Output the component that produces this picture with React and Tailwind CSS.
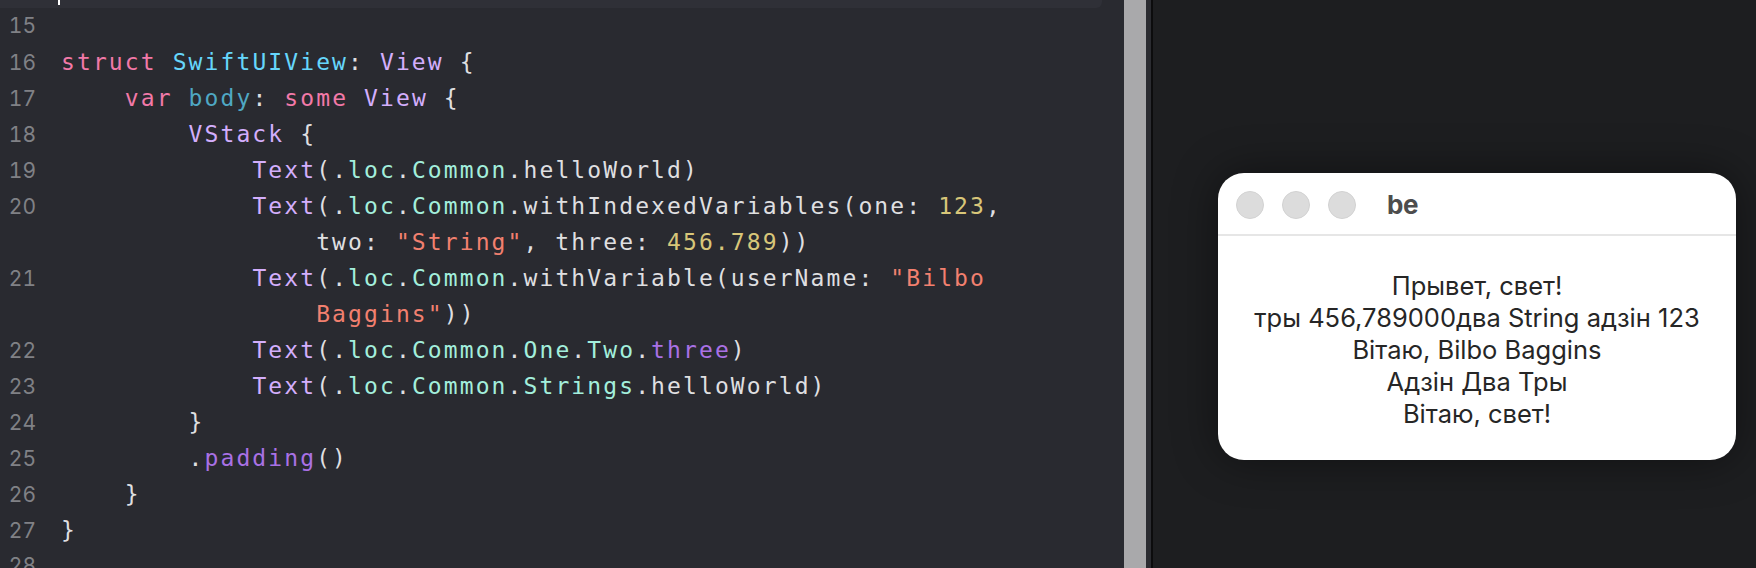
const C = {
  plain: 'text-[#dfdfe0]',
  kw: 'text-[#f279a8]',
  decl: 'text-[#66d6fb]',
  prop: 'text-[#4fa8c4]',
  type: 'text-[#d3aefc]',
  mint: 'text-[#a3efdc]',
  num: 'text-[#d8c679]',
  str: 'text-[#f2806f]',
  fn: 'text-[#a971e5]',
};

const t = (cls, s) => ({ cls, s });
const p = (s) => t(C.plain, s);
const loc = [p('('), p('.'), t(C.mint, 'loc'), p('.'), t(C.mint, 'Common'), p('.')];

const rows = [
  { n: 15, code: [] },
  { n: 16, code: [t(C.kw, 'struct'), p(' '), t(C.decl, 'SwiftUIView'), p(': '), t(C.type, 'View'), p(' {')] },
  { n: 17, code: [p('    '), t(C.kw, 'var'), p(' '), t(C.prop, 'body'), p(': '), t(C.kw, 'some'), p(' '), t(C.type, 'View'), p(' {')] },
  { n: 18, code: [p('        '), t(C.type, 'VStack'), p(' {')] },
  { n: 19, code: [p('            '), t(C.type, 'Text'), ...loc, p('helloWorld)')] },
  { n: 20, code: [p('            '), t(C.type, 'Text'), ...loc, p('withIndexedVariables(one: '), t(C.num, '123'), p(',')] },
  { n: '', code: [p('                two: '), t(C.str, '"String"'), p(', three: '), t(C.num, '456.789'), p('))')] },
  { n: 21, code: [p('            '), t(C.type, 'Text'), ...loc, p('withVariable(userName: '), t(C.str, '"Bilbo')] },
  { n: '', code: [p('                '), t(C.str, 'Baggins"'), p('))')] },
  { n: 22, code: [p('            '), t(C.type, 'Text'), ...loc, t(C.mint, 'One'), p('.'), t(C.mint, 'Two'), p('.'), t(C.fn, 'three'), p(')')] },
  { n: 23, code: [p('            '), t(C.type, 'Text'), ...loc, t(C.mint, 'Strings'), p('.helloWorld)')] },
  { n: 24, code: [p('        }')] },
  { n: 25, code: [p('        .'), t(C.fn, 'padding'), p('()')] },
  { n: 26, code: [p('    }')] },
  { n: 27, code: [p('}')] },
  { n: 28, code: [] },
];

const lines = ['Прывет, свет!', 'тры 456,789000два String адзін 123', 'Вітаю, Bilbo Baggins', 'Адзін Два Тры', 'Вітаю, свет!'];

const Editor = () => (
  <div className="w-[1124px] h-full bg-[#292a30] overflow-hidden">
    {/* current line highlight, mostly scrolled out */}
    <div className="relative h-[8px] w-[1102px] bg-[#2f3037] rounded-br-md">
      <div className="absolute left-[58px] top-0 w-[2px] h-[5px] bg-white" />
    </div>
    <div className="flex flex-col">
      {rows.map((r, i) => (
        <div key={i} className="flex items-baseline h-[36px] leading-[36px]">
          <div className="w-[36px] text-right text-[21px] tabular-nums text-[#808186] font-['Inter',sans-serif]">{r.n}</div>
          <div className="ml-[25px] whitespace-pre text-[23px] tracking-[2.1px] font-['DejaVu_Sans_Mono',monospace]">
            {r.code.map((c, j) => (
              <span key={j} className={c.cls}>{c.s}</span>
            ))}
          </div>
        </div>
      ))}
    </div>
  </div>
);

const Dot = () => <div className="w-[28px] h-[28px] rounded-full bg-[#dcdcdc] border border-[#d2d2d2]" />;

export default function App() {
  return (
    <div className="flex w-[1756px] h-[568px] overflow-hidden">
      <Editor />
      <div className="w-[22px] h-full bg-[#a9a9ab]" />
      <div className="w-[5px] h-full bg-[#2b2c31]" />
      <div className="w-[2px] h-full bg-[#0c0c0d]" />
      <div className="flex-1 h-full bg-[#1d1e20] pl-[65px] pt-[173px]">
        <div className="w-[518px] h-[287px] bg-white rounded-[26px] shadow-[0_0_45px_rgba(0,0,0,0.45)] flex flex-col overflow-hidden">
          <div className="h-[63px] flex items-center pl-[18px] pt-[2px] border-b-2 border-[#e6e6e6]">
            <div className="flex gap-[18px]">
              <Dot />
              <Dot />
              <Dot />
            </div>
            <span className="ml-[31px] text-[26px] font-bold text-[#4d4d4d] font-['Inter',sans-serif] tracking-[-0.5px]">be</span>
          </div>
          <div className="flex flex-col items-center pt-[34px] text-[25.5px] leading-[32px] text-[#262626] font-['Inter',sans-serif]">
            {lines.map((l) => (
              <div key={l}>{l}</div>
            ))}
          </div>
        </div>
      </div>
    </div>
  );
}
